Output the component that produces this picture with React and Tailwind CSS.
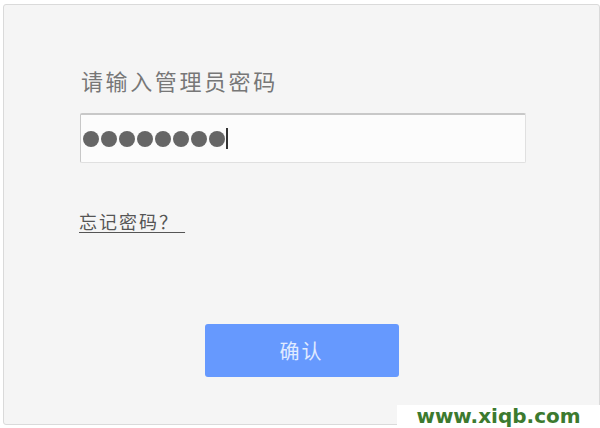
export default function App() {
  return (
    <div className="relative w-[600px] h-[428px] bg-white overflow-hidden font-['Noto_Sans_CJK_SC',sans-serif]">
      <div className="ml-[3px] mt-[4px] w-[597px] h-[421px] bg-[#f5f5f5] border border-[#dadada] rounded-[3px] flex flex-col">
        <div className="ml-[77px] mt-[60px] text-[22px] leading-[30px] tracking-[2.6px] text-[#777]">
          请输入管理员密码
        </div>
        <div className="ml-[76px] mt-[18px] w-[446px] h-[50px] bg-[#fcfcfc] border border-[#e0e0e0] border-t-[#c8c8c8] border-l-[#c8c8c8] border-t-2 rounded-[2px] flex items-center pl-[2px]">
          <div className="flex gap-[2px]">
            {Array.from({ length: 8 }).map((_, i) => (
              <span key={i} className="block w-[16px] h-[16px] rounded-full bg-[#666]" />
            ))}
          </div>
          <span className="block ml-[1px] w-[2px] h-[21px] bg-[#333]" />
        </div>
        <a className="ml-[75px] mt-[45px] self-start text-[18px] leading-[26px] tracking-[2px] text-[#555] underline underline-offset-[3px]">
          忘记密码？&nbsp;
        </a>
        <button className="self-center mt-[90px] w-[194px] h-[53px] bg-[#6699fe] rounded-[3px] text-[20px] text-[#e0ebff] tracking-[2px]">
          确认
        </button>
      </div>
      <div className="absolute left-[397px] top-[405px] w-[203px] h-[23px] bg-white flex items-center justify-center">
        <span className="font-['DejaVu_Sans',sans-serif] font-bold text-[20px] leading-[23px] text-[#3c7a2f]">
          www.xiqb.com
        </span>
      </div>
    </div>
  )
}
